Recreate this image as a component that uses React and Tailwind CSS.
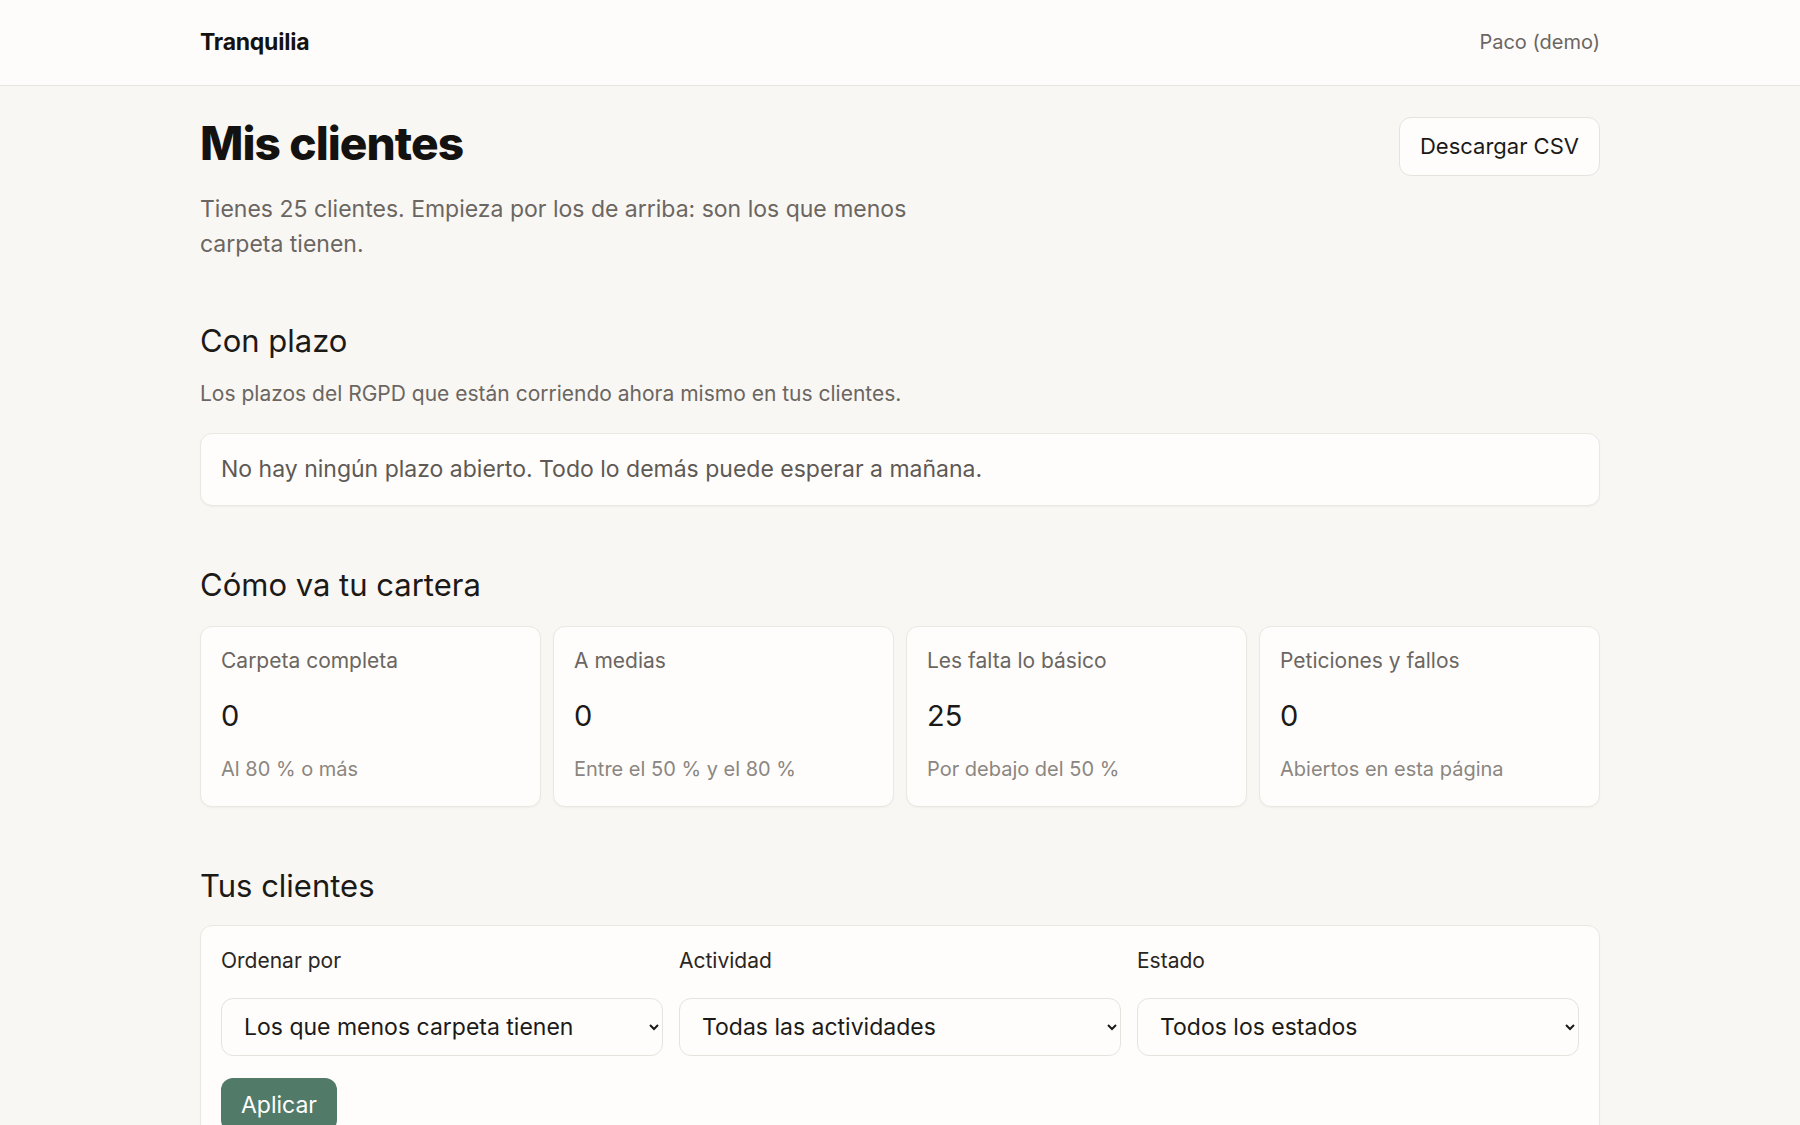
import React from "react";

const stats = [
  { label: "Carpeta completa", value: "0", hint: "Al 80 % o más" },
  { label: "A medias", value: "0", hint: "Entre el 50 % y el 80 %" },
  { label: "Les falta lo básico", value: "25", hint: "Por debajo del 50 %" },
  { label: "Peticiones y fallos", value: "0", hint: "Abiertos en esta página" },
];

const filters = [
  { label: "Ordenar por", options: ["Los que menos carpeta tienen", "Los que más carpeta tienen", "Nombre"] },
  { label: "Actividad", options: ["Todas las actividades"] },
  { label: "Estado", options: ["Todos los estados"] },
];

export default function App() {
  return (
    <div className="min-h-screen bg-[#f9f7f4] text-[#1c1a17] font-['Inter','Open_Sans',sans-serif]">
      {/* ── Header ─────────────────────────────── */}
      <header className="h-[86px] bg-[#fdfcfb] border-b border-[#e9e5e0]">
        <div className="max-w-[1400px] mx-auto h-full flex items-center justify-between">
          <span className="text-[23px] font-bold tracking-[-0.01em] text-[#141210]">Tranquilia</span>
          <span className="text-[20px] text-[#6b6661] -mt-[2px]">Paco (demo)</span>
        </div>
      </header>

      <main className="max-w-[1400px] mx-auto pt-[31px] pb-16">
        {/* ── Title ─────────────────────────────── */}
        <div className="flex items-start justify-between">
          <div>
            <h1 className="text-[46px] leading-[52px] font-extrabold tracking-[-0.02em] text-[#141210]">
              Mis clientes
            </h1>
            <p className="mt-[23px] max-w-[760px] text-[23px] leading-[35px] text-[#6b6661]">
              Tienes 25 clientes. Empieza por los de arriba: son los que menos carpeta tienen.
            </p>
          </div>
          <button className="h-[59px] px-5 rounded-xl border border-[#e6e2dd] bg-[#fefdfc] text-[22px] text-[#1c1a17]">
            Descargar CSV
          </button>
        </div>

        {/* ── Con plazo ─────────────────────────── */}
        <h2 className="mt-[61px] text-[31px] leading-[36px]">Con plazo</h2>
        <p className="mt-[21px] text-[21px] leading-[28px] text-[#6b6661]">
          Los plazos del RGPD que están corriendo ahora mismo en tus clientes.
        </p>
        <div className="mt-[25px] px-5 py-[21px] rounded-xl border border-[#ebe7e2] bg-[#fefdfc] shadow-[0_1px_2px_rgba(0,0,0,0.04)] text-[23px] leading-[29px] text-[#5e5954]">
          No hay ningún plazo abierto. Todo lo demás puede esperar a mañana.
        </div>

        {/* ── Cartera ───────────────────────────── */}
        <h2 className="mt-[61px] text-[31px] leading-[36px]">Cómo va tu cartera</h2>
        <div className="mt-[23px] grid grid-cols-4 gap-3">
          {stats.map((s) => (
            <div
              key={s.label}
              className="h-[181px] px-5 pt-[21px] rounded-xl border border-[#ebe7e2] bg-[#fefdfc] shadow-[0_1px_2px_rgba(0,0,0,0.04)]"
            >
              <div className="text-[21px] leading-[26px] text-[#6b6661]">{s.label}</div>
              <div className="mt-6 text-[29px] leading-[36px] text-[#1c1a17]">{s.value}</div>
              <div className="mt-[22px] text-[20px] leading-[26px] text-[#8b8680]">{s.hint}</div>
            </div>
          ))}
        </div>

        {/* ── Tus clientes ──────────────────────── */}
        <h2 className="mt-[61px] text-[31px] leading-[36px]">Tus clientes</h2>
        <div className="mt-[21px] px-5 pt-[22px] pb-6 rounded-xl border border-[#ebe7e2] bg-[#fefdfc] shadow-[0_1px_2px_rgba(0,0,0,0.04)]">
          <div className="grid grid-cols-3 gap-4">
            {filters.map((f) => (
              <label key={f.label} className="flex flex-col">
                <span className="text-[21px] leading-[26px] text-[#2a2622]">{f.label}</span>
                <select className="mt-6 h-[58px] pl-[18px] pr-2 rounded-xl border border-[#e6e2dd] bg-[#fefdfc] text-[23px] text-[#1c1a17]">
                  {f.options.map((o) => (
                    <option key={o}>{o}</option>
                  ))}
                </select>
              </label>
            ))}
          </div>
          <button className="mt-[22px] h-[54px] px-5 rounded-xl bg-[#517a69] text-[23px] text-white">
            Aplicar
          </button>
        </div>
      </main>
    </div>
  );
}
